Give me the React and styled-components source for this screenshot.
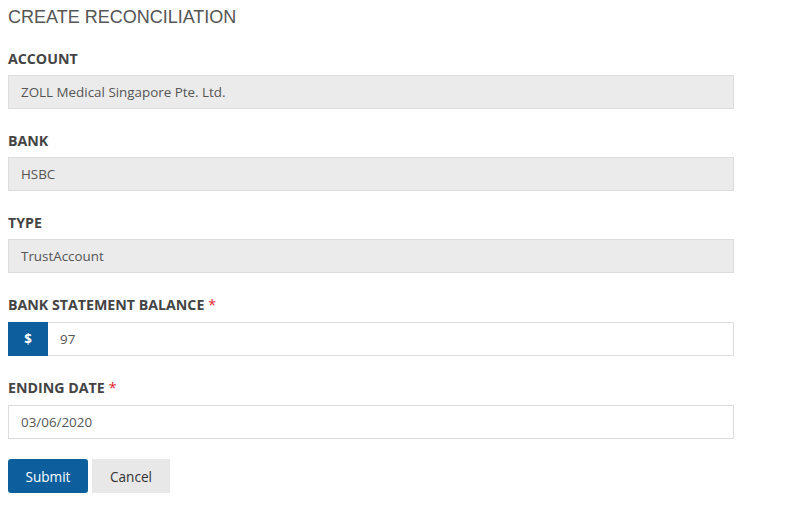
import React from "react";
import styled, { createGlobalStyle } from "styled-components";

const Global = createGlobalStyle`
  body {
    margin: 0;
    background: #fff;
    font-family: "Open Sans", "Liberation Sans", sans-serif;
  }
`;

const Page = styled.div`
  padding: 8px 60px 0 8px;
`;

const Title = styled.h1`
  margin: -1px 0 22px;
  font-family: "Liberation Sans", Arial, sans-serif;
  font-weight: normal;
  font-size: 18px;
  line-height: 20px;
  color: #555;
`;

const Group = styled.div`
  margin-bottom: 22px;
`;

const Label = styled.label`
  display: block;
  margin-bottom: ${(p) => (p.required ? 7 : 6)}px;
  font-size: 14.2px;
  line-height: 20px;
  font-weight: bold;
  color: #444;
  text-transform: uppercase;
`;

const Required = styled.span`
  color: #e4252b;
  font-weight: normal;
  margin-left: 4px;
`;

const Field = styled.div`
  display: flex;
  height: 34px;
  box-sizing: border-box;
  border: 1px solid #ddd;
  background: ${(p) => (p.readOnly ? "#ebebeb" : "#fff")};
`;

const Value = styled.div`
  flex: 1;
  display: flex;
  align-items: center;
  padding-left: 12px;
  font-size: 13.4px;
  color: #555;
`;

const Addon = styled.div`
  width: 40px;
  margin: -1px 0 -1px -1px;
  display: flex;
  align-items: center;
  justify-content: center;
  background: #0c5e9d;
  color: #fff;
  font-size: 13.4px;
  font-weight: bold;
`;

const Actions = styled.div`
  display: flex;
  gap: 4px;
  margin-top: -2px;
`;

const Button = styled.button`
  height: 34px;
  padding: 0 ${(p) => (p.primary ? 17.5 : 18)}px;
  border: none;
  border-radius: ${(p) => (p.primary ? 3 : 0)}px;
  background: ${(p) => (p.primary ? "#0c5e9d" : "#e8e8e8")};
  color: ${(p) => (p.primary ? "#fff" : "#333")};
  font-family: "Open Sans", sans-serif;
  font-size: 13.6px;
`;

const fields = [
  { label: "Account", value: "ZOLL Medical Singapore Pte. Ltd.", readOnly: true },
  { label: "Bank", value: "HSBC", readOnly: true },
  { label: "Type", value: "TrustAccount", readOnly: true },
  { label: "Bank Statement Balance", value: "97", required: true, addon: "$" },
  { label: "Ending Date", value: "03/06/2020", required: true },
];

export default function App() {
  return (
    <Page>
      <Global />
      <Title>CREATE RECONCILIATION</Title>
      {fields.map((f) => (
        <Group key={f.label}>
          <Label required={f.required}>
            {f.label}
            {f.required && <Required>*</Required>}
          </Label>
          <Field readOnly={f.readOnly}>
            {f.addon && <Addon>{f.addon}</Addon>}
            <Value>{f.value}</Value>
          </Field>
        </Group>
      ))}
      <Actions>
        <Button primary>Submit</Button>
        <Button>Cancel</Button>
      </Actions>
    </Page>
  );
}
